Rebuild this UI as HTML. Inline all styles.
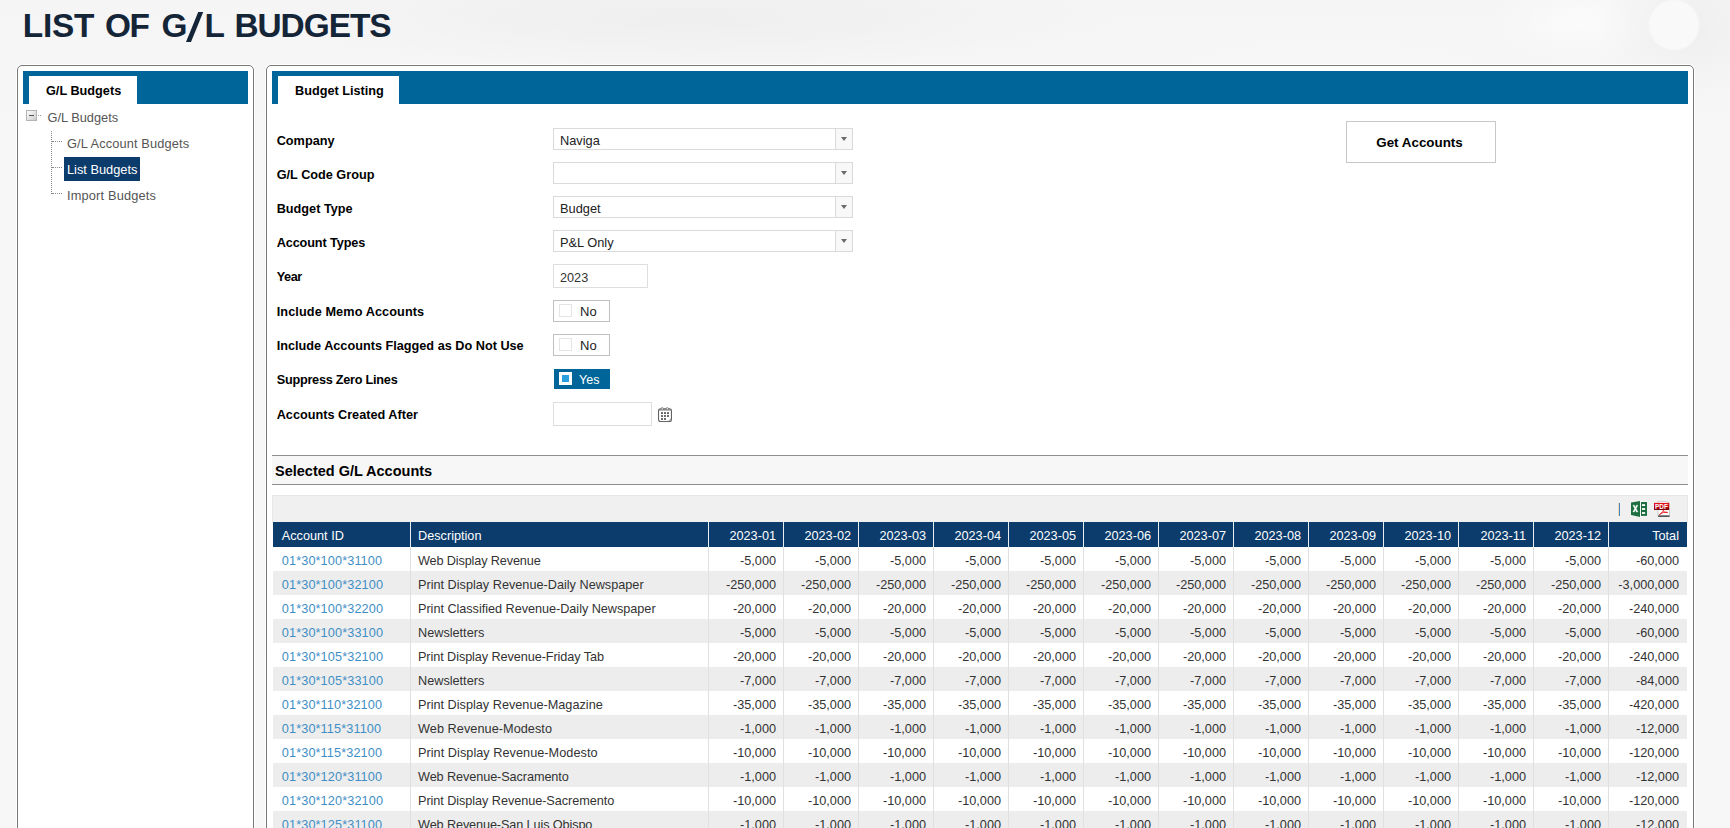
<!DOCTYPE html>
<html><head><meta charset="utf-8"><title>List of G/L Budgets</title>
<style>
*{box-sizing:border-box;margin:0;padding:0}
html,body{width:1730px;height:828px;overflow:hidden}
body{font-family:"Liberation Sans",sans-serif;font-size:13px;color:#222;background:#f6f6f6;position:relative}
.abs{position:absolute}
#bg{position:absolute;left:0;top:0;width:1730px;height:828px;
 background:
 radial-gradient(circle at 1674px 25px,#f9f9f9 0,#f9f9f9 24px,rgba(249,249,249,0) 26px),
 radial-gradient(ellipse 90px 70px at 1690px 30px,rgba(238,238,238,.9),rgba(238,238,238,0)),
 radial-gradient(ellipse 90px 40px at 1580px 22px,rgba(251,251,251,.95),rgba(251,251,251,0)),
 radial-gradient(ellipse 200px 80px at 1330px 110px,rgba(250,250,250,.9),rgba(250,250,250,0)),
 radial-gradient(ellipse 420px 55px at 690px 18px,rgba(238,238,238,.95),rgba(238,238,238,0)),
 linear-gradient(180deg,#f5f5f5 0,#f6f6f6 60px,#f7f7f7 100%);}
h1{position:absolute;left:24px;top:6.5px;width:400px;height:38px;font-size:33.4px;line-height:38px;font-weight:bold;color:#152538;white-space:nowrap}
h1 span{position:absolute;top:0}
.panel{position:absolute;top:65px;height:800px;background:#fff;border:1px solid #787878;border-radius:5px;box-shadow:0 0 0 1px #fff}
#lp{left:17px;width:237px}
#mp{left:266px;width:1428px}
.bar{position:absolute;top:71px;height:33px;background:#006699}
.tab{position:absolute;top:76px;height:28px;background:#fff;font-weight:bold;font-size:12.7px;color:#000;white-space:nowrap}
.tab span{position:absolute;top:7px;line-height:16px}
.tree{position:absolute;font-size:12.8px;color:#555;white-space:nowrap;line-height:16px}
.lbl{position:absolute;left:276.7px;font-weight:bold;font-size:12.7px;color:#000;white-space:nowrap;line-height:16px}
.dd{position:absolute;left:553px;width:300px;height:22px;border:1px solid #dadada;background:#fff;font-size:12.8px;color:#222}
.dd span{position:absolute;left:6px;top:4px;line-height:16px;white-space:nowrap}
.dd i{position:absolute;right:0;top:0;width:17px;height:20px;border-left:1px solid #dadada;background:#f8f8f8}
.dd i:after{content:"";position:absolute;left:4.8px;top:8px;border-left:3.7px solid transparent;border-right:3.7px solid transparent;border-top:4px solid #6a6a6a}
.inp{position:absolute;left:553px;height:24px;border:1px solid #dedede;background:#fff;font-size:12.7px;color:#333}
.inp span{position:absolute;left:6px;top:5px;line-height:16px}
.tg{position:absolute;left:553px;width:57px;height:22px;border:1px solid #c0c0c0;background:#fff;font-size:13px;color:#222}
.tg b{position:absolute;left:5px;top:3px;width:13px;height:13px;border:1px solid #e4e4e4;background:#fff}
.tg span{position:absolute;left:26px;top:3px;line-height:16px;font-weight:normal}
.tg.on{left:554px;top:369px;width:56px;height:20px;border:0;background:#006699;color:#fff}
.tg.on b{left:5px;top:3px;width:13px;height:13px;border:3px solid #fff;background:#2b9fe0}
.tg.on span{left:25px;top:3px;font-size:12.5px}
#btn{position:absolute;left:1346px;top:121px;width:150px;height:42px;border:1px solid #c8c8c8;background:#fff;font-weight:bold;font-size:13.4px;color:#000;text-align:center;line-height:41px;padding-right:3px}
#sec{position:absolute;left:272px;top:455px;width:1416px;height:30px;border-top:1px solid #8e8e8e;border-bottom:1px solid #8e8e8e;background:#f7f7f7}
#sec span{position:absolute;left:3px;top:6px;font-weight:bold;font-size:14.5px;line-height:18px;color:#000;white-space:nowrap}
#tb{position:absolute;left:272px;top:495px;width:1416px;height:28px;background:#f0f0f0;border:1px solid #e6e6e6}
#thead{position:absolute;left:273px;top:522px;width:1414px;height:25px;background:#0c3c6c}
.th{position:absolute;top:0;height:25px;color:#fff;font-size:12.7px;white-space:nowrap;border-left:1px solid #e8eef4}
.th span{position:absolute;top:6px;line-height:16px}
.tr{position:absolute;left:273px;width:1414px;height:24px;background:#fff}
.tr.alt{background:#ededed}
.td{position:absolute;top:0;height:24px;font-size:12.7px;color:#333;white-space:nowrap;border-left:1px solid #e0e0e0}
.td span{position:absolute;top:6px;line-height:16px}
.c0{left:0;width:137px;border-left:0}
.c1{left:137px;width:298px}
.c0 span{left:8.8px}.c1 span{left:7px}
.n span{right:7px}
.tot span{right:8px}
.lnk{color:#3f8fc6;letter-spacing:.12px}
.m1{left:435px;width:75px}.m2{left:510px;width:75px}.m3{left:585px;width:75px}.m4{left:660px;width:75px}
.m5{left:735px;width:75px}.m6{left:810px;width:75px}.m7{left:885px;width:75px}.m8{left:960px;width:75px}
.m9{left:1035px;width:75px}.m10{left:1110px;width:75px}.m11{left:1185px;width:75px}.m12{left:1260px;width:75px}
.tot{left:1335px;width:79px}

</style></head>
<body>
<div id="bg"></div>
<h1 id="title"><span id="w1" style="left:-1.2px;letter-spacing:-.25px">LIST</span><span id="w2" style="left:80.9px;letter-spacing:-1.4px">OF</span><span id="w3" style="left:137.5px">G</span><span id="w3b" style="left:180.6px">L</span><span id="w4" style="left:210.4px;letter-spacing:-1px">BUDGETS</span></h1>
<svg class="abs" style="left:184px;top:10px" width="22" height="34" viewBox="0 0 22 34"><polygon points="14.2,2 19.2,2 7,32 2,32" fill="#152538"/></svg>

<div class="panel" id="lp"></div>
<div class="bar" style="left:23px;width:225px"></div>
<div class="tab" id="ltab" style="left:29px;width:108px"><span id="ltabt" style="left:17px">G/L Budgets</span></div>

<svg class="abs" style="left:26px;top:110px" width="16" height="12" viewBox="0 0 16 12">
 <defs><linearGradient id="eg" x1="0" y1="0" x2="1" y2="1"><stop offset="0" stop-color="#ffffff"/><stop offset="1" stop-color="#c9c9c9"/></linearGradient></defs>
 <rect x="0.5" y="0.5" width="10" height="10" fill="url(#eg)" stroke="#b4b4b4"/>
 <rect x="3" y="5" width="5" height="1" fill="#555"/>
 <rect x="12" y="5" width="1" height="1" fill="#999"/><rect x="14" y="5" width="1" height="1" fill="#999"/>
</svg>
<div class="tree" id="t0" style="left:47.5px;top:110px">G/L Budgets</div>
<div class="abs" style="left:51px;top:131px;width:0;height:63px;border-left:1px dotted #8a8a8a"></div>
<div class="abs" style="left:52px;top:141px;width:10px;height:0;border-top:1px dotted #8a8a8a"></div>
<div class="abs" style="left:52px;top:167px;width:10px;height:0;border-top:1px dotted #8a8a8a"></div>
<div class="abs" style="left:52px;top:193px;width:10px;height:0;border-top:1px dotted #8a8a8a"></div>
<div class="tree" id="t1" style="left:67px;top:136px;letter-spacing:.13px">G/L Account Budgets</div>
<div class="abs" style="left:64px;top:157px;width:76px;height:24px;background:#0c3c6c"></div>
<div class="tree" id="t2" style="left:67px;top:162px;color:#fff">List Budgets</div>
<div class="tree" id="t3" style="left:67px;top:188px;letter-spacing:.16px">Import Budgets</div>

<div class="panel" id="mp"></div>
<div class="bar" style="left:272px;width:1416px"></div>
<div class="tab" id="mtab" style="left:278px;width:121px"><span id="mtabt" style="left:17px">Budget Listing</span></div>

<div class="lbl" id="l1" style="top:133px">Company</div>
<div class="lbl" id="l2" style="top:167px">G/L Code Group</div>
<div class="lbl" id="l3" style="top:201px">Budget Type</div>
<div class="lbl" id="l4" style="top:235px;letter-spacing:-.12px">Account Types</div>
<div class="lbl" id="l5" style="top:269px;letter-spacing:-.4px">Year</div>
<div class="lbl" id="l6" style="top:304px;letter-spacing:.1px">Include Memo Accounts</div>
<div class="lbl" id="l7" style="top:338px">Include Accounts Flagged as Do Not Use</div>
<div class="lbl" id="l8" style="top:372px;letter-spacing:-.25px">Suppress Zero Lines</div>
<div class="lbl" id="l9" style="top:407px">Accounts Created After</div>

<div class="dd" style="top:128px"><span id="d1">Naviga</span><i></i></div>
<div class="dd" style="top:162px"><i></i></div>
<div class="dd" style="top:196px"><span id="d3">Budget</span><i></i></div>
<div class="dd" style="top:230px"><span id="d4">P&amp;L Only</span><i></i></div>
<div class="inp" style="top:264px;width:95px"><span id="yr">2023</span></div>
<div class="tg" style="top:300px"><b></b><span id="no1">No</span></div>
<div class="tg" style="top:334px"><b></b><span id="no2">No</span></div>
<div class="tg on"><b></b><span id="yes">Yes</span></div>
<div class="inp" style="top:402px;width:99px"></div>
<svg class="abs" id="cal" style="left:658px;top:407px" width="14" height="15" viewBox="0 0 14 15">
 <rect x="0.55" y="1.85" width="12.9" height="12.6" rx="2" fill="#fff" stroke="#636363" stroke-width="1.1"/>
 <rect x="1" y="2.2" width="12" height="1.3" fill="#808080"/>
 <rect x="3.35" y="0.35" width="1.6" height="2.6" rx=".8" fill="#fff" stroke="#747474" stroke-width=".7"/>
 <rect x="8.45" y="0.35" width="1.6" height="2.6" rx=".8" fill="#fff" stroke="#747474" stroke-width=".7"/>
 <g fill="#5c5c5c"><rect x="3" y="5.2" width="2" height="1.8"/><rect x="6" y="5.2" width="2" height="1.8"/><rect x="9" y="5.2" width="2" height="1.8"/>
 <rect x="3" y="8.1" width="2" height="1.8"/><rect x="6" y="8.1" width="2" height="1.8"/><rect x="9" y="8.1" width="2" height="1.8"/>
 <rect x="3" y="11.1" width="2" height="1.8"/><rect x="6" y="11.1" width="2" height="1.8"/></g>
 <path d="M10.2 14 L13 11.2 L13 12.4 Q13 14 11.4 14 Z" fill="#a9a9a9"/>
</svg>

<div id="btn"><span id="btnt">Get Accounts</span></div>

<div id="sec"><span id="sect">Selected G/L Accounts</span></div>
<div id="tb"></div>
<div class="abs" style="left:1618px;top:503px;width:1px;height:13px;background:#f3d7b0"></div><div class="abs" style="left:1619px;top:503px;width:1px;height:13px;background:#3f86c4"></div>
<svg class="abs" id="xls" style="left:1631px;top:501px" width="16" height="16" viewBox="0 0 16 16">
 <rect x="9.6" y="0.6" width="6.9" height="14.7" fill="#fbfbfb"/>
 <rect x="10" y="1" width="6" height="13.9" fill="#1d6f42"/>
 <rect x="11" y="3.2" width="3.1" height="1.8" fill="#fff"/><rect x="11" y="7.1" width="3.1" height="1.8" fill="#fff"/><rect x="11" y="11.1" width="3.1" height="1.8" fill="#fff"/>
 <path d="M-0.4 1 L9.5 -0.5 L9.5 16.5 L-0.4 14.4 Z" fill="#fbfbfb"/>
 <path d="M0 1.4 L9 0 L9 16 L0 14 Z" fill="#1d6f42"/>
 <path d="M1.9 4.2 L3.5 4.2 L4.45 6.4 L5.4 4.2 L6.9 4.2 L5.25 7.6 L6.95 11 L5.4 11 L4.4 8.8 L3.4 11 L1.85 11 L3.6 7.6 Z" fill="#fff" stroke="#fff" stroke-width=".35"/>
</svg>
<svg class="abs" id="pdf" style="left:1654px;top:501px" width="16" height="16" viewBox="0 0 16 16">
 <defs><linearGradient id="pg" x1="0" y1="0" x2="0" y2="1"><stop offset="0" stop-color="#e8121a"/><stop offset=".55" stop-color="#c40008"/><stop offset="1" stop-color="#6e0004"/></linearGradient></defs>
 <path d="M4 0.4 L12.6 0.4 L15.5 2.4 L15.5 15 L4 15 Z" fill="#fff" stroke="#bdbdbd" stroke-width=".8"/>
 <rect x="4" y="14.6" width="11.6" height="1.2" rx=".5" fill="#2a2a2a"/>
 <rect x="0" y="1.9" width="15.1" height="7.1" fill="url(#pg)"/>
 <text x="7.5" y="7.8" font-family="Liberation Sans" font-weight="bold" font-size="6.5" fill="#fff" text-anchor="middle" textLength="13" lengthAdjust="spacingAndGlyphs">PDF</text>
 <path d="M5.4 13.6 C7.6 12.6 8.8 10.8 9.3 9.3 C9.5 11 11 12 13.6 11.4 C11.5 10.6 8 11.4 5.4 13.6 Z" fill="none" stroke="#e8121a" stroke-width=".9"/>
</svg>
<div id="thead"><div class="th c0"><span>Account ID</span></div><div class="th c1"><span>Description</span></div><div class="th n m1"><span>2023-01</span></div><div class="th n m2"><span>2023-02</span></div><div class="th n m3"><span>2023-03</span></div><div class="th n m4"><span>2023-04</span></div><div class="th n m5"><span>2023-05</span></div><div class="th n m6"><span>2023-06</span></div><div class="th n m7"><span>2023-07</span></div><div class="th n m8"><span>2023-08</span></div><div class="th n m9"><span>2023-09</span></div><div class="th n m10"><span>2023-10</span></div><div class="th n m11"><span>2023-11</span></div><div class="th n m12"><span>2023-12</span></div><div class="th n tot"><span>Total</span></div></div>
<div class="tr" style="top:547px"><div class="td c0"><span class="lnk">01*30*100*31100</span></div><div class="td c1"><span style="letter-spacing:-0.144px">Web Display Revenue</span></div><div class="td n m1"><span>-5,000</span></div><div class="td n m2"><span>-5,000</span></div><div class="td n m3"><span>-5,000</span></div><div class="td n m4"><span>-5,000</span></div><div class="td n m5"><span>-5,000</span></div><div class="td n m6"><span>-5,000</span></div><div class="td n m7"><span>-5,000</span></div><div class="td n m8"><span>-5,000</span></div><div class="td n m9"><span>-5,000</span></div><div class="td n m10"><span>-5,000</span></div><div class="td n m11"><span>-5,000</span></div><div class="td n m12"><span>-5,000</span></div><div class="td n tot"><span>-60,000</span></div></div>
<div class="tr alt" style="top:571px"><div class="td c0"><span class="lnk">01*30*100*32100</span></div><div class="td c1"><span>Print Display Revenue-Daily Newspaper</span></div><div class="td n m1"><span>-250,000</span></div><div class="td n m2"><span>-250,000</span></div><div class="td n m3"><span>-250,000</span></div><div class="td n m4"><span>-250,000</span></div><div class="td n m5"><span>-250,000</span></div><div class="td n m6"><span>-250,000</span></div><div class="td n m7"><span>-250,000</span></div><div class="td n m8"><span>-250,000</span></div><div class="td n m9"><span>-250,000</span></div><div class="td n m10"><span>-250,000</span></div><div class="td n m11"><span>-250,000</span></div><div class="td n m12"><span>-250,000</span></div><div class="td n tot"><span>-3,000,000</span></div></div>
<div class="tr" style="top:595px"><div class="td c0"><span class="lnk">01*30*100*32200</span></div><div class="td c1"><span style="letter-spacing:-0.037px">Print Classified Revenue-Daily Newspaper</span></div><div class="td n m1"><span>-20,000</span></div><div class="td n m2"><span>-20,000</span></div><div class="td n m3"><span>-20,000</span></div><div class="td n m4"><span>-20,000</span></div><div class="td n m5"><span>-20,000</span></div><div class="td n m6"><span>-20,000</span></div><div class="td n m7"><span>-20,000</span></div><div class="td n m8"><span>-20,000</span></div><div class="td n m9"><span>-20,000</span></div><div class="td n m10"><span>-20,000</span></div><div class="td n m11"><span>-20,000</span></div><div class="td n m12"><span>-20,000</span></div><div class="td n tot"><span>-240,000</span></div></div>
<div class="tr alt" style="top:619px"><div class="td c0"><span class="lnk">01*30*100*33100</span></div><div class="td c1"><span>Newsletters</span></div><div class="td n m1"><span>-5,000</span></div><div class="td n m2"><span>-5,000</span></div><div class="td n m3"><span>-5,000</span></div><div class="td n m4"><span>-5,000</span></div><div class="td n m5"><span>-5,000</span></div><div class="td n m6"><span>-5,000</span></div><div class="td n m7"><span>-5,000</span></div><div class="td n m8"><span>-5,000</span></div><div class="td n m9"><span>-5,000</span></div><div class="td n m10"><span>-5,000</span></div><div class="td n m11"><span>-5,000</span></div><div class="td n m12"><span>-5,000</span></div><div class="td n tot"><span>-60,000</span></div></div>
<div class="tr" style="top:643px"><div class="td c0"><span class="lnk">01*30*105*32100</span></div><div class="td c1"><span style="letter-spacing:-0.089px">Print Display Revenue-Friday Tab</span></div><div class="td n m1"><span>-20,000</span></div><div class="td n m2"><span>-20,000</span></div><div class="td n m3"><span>-20,000</span></div><div class="td n m4"><span>-20,000</span></div><div class="td n m5"><span>-20,000</span></div><div class="td n m6"><span>-20,000</span></div><div class="td n m7"><span>-20,000</span></div><div class="td n m8"><span>-20,000</span></div><div class="td n m9"><span>-20,000</span></div><div class="td n m10"><span>-20,000</span></div><div class="td n m11"><span>-20,000</span></div><div class="td n m12"><span>-20,000</span></div><div class="td n tot"><span>-240,000</span></div></div>
<div class="tr alt" style="top:667px"><div class="td c0"><span class="lnk">01*30*105*33100</span></div><div class="td c1"><span>Newsletters</span></div><div class="td n m1"><span>-7,000</span></div><div class="td n m2"><span>-7,000</span></div><div class="td n m3"><span>-7,000</span></div><div class="td n m4"><span>-7,000</span></div><div class="td n m5"><span>-7,000</span></div><div class="td n m6"><span>-7,000</span></div><div class="td n m7"><span>-7,000</span></div><div class="td n m8"><span>-7,000</span></div><div class="td n m9"><span>-7,000</span></div><div class="td n m10"><span>-7,000</span></div><div class="td n m11"><span>-7,000</span></div><div class="td n m12"><span>-7,000</span></div><div class="td n tot"><span>-84,000</span></div></div>
<div class="tr" style="top:691px"><div class="td c0"><span class="lnk">01*30*110*32100</span></div><div class="td c1"><span>Print Display Revenue-Magazine</span></div><div class="td n m1"><span>-35,000</span></div><div class="td n m2"><span>-35,000</span></div><div class="td n m3"><span>-35,000</span></div><div class="td n m4"><span>-35,000</span></div><div class="td n m5"><span>-35,000</span></div><div class="td n m6"><span>-35,000</span></div><div class="td n m7"><span>-35,000</span></div><div class="td n m8"><span>-35,000</span></div><div class="td n m9"><span>-35,000</span></div><div class="td n m10"><span>-35,000</span></div><div class="td n m11"><span>-35,000</span></div><div class="td n m12"><span>-35,000</span></div><div class="td n tot"><span>-420,000</span></div></div>
<div class="tr alt" style="top:715px"><div class="td c0"><span class="lnk">01*30*115*31100</span></div><div class="td c1"><span style="letter-spacing:0.052px">Web Revenue-Modesto</span></div><div class="td n m1"><span>-1,000</span></div><div class="td n m2"><span>-1,000</span></div><div class="td n m3"><span>-1,000</span></div><div class="td n m4"><span>-1,000</span></div><div class="td n m5"><span>-1,000</span></div><div class="td n m6"><span>-1,000</span></div><div class="td n m7"><span>-1,000</span></div><div class="td n m8"><span>-1,000</span></div><div class="td n m9"><span>-1,000</span></div><div class="td n m10"><span>-1,000</span></div><div class="td n m11"><span>-1,000</span></div><div class="td n m12"><span>-1,000</span></div><div class="td n tot"><span>-12,000</span></div></div>
<div class="tr" style="top:739px"><div class="td c0"><span class="lnk">01*30*115*32100</span></div><div class="td c1"><span style="letter-spacing:0.039px">Print Display Revenue-Modesto</span></div><div class="td n m1"><span>-10,000</span></div><div class="td n m2"><span>-10,000</span></div><div class="td n m3"><span>-10,000</span></div><div class="td n m4"><span>-10,000</span></div><div class="td n m5"><span>-10,000</span></div><div class="td n m6"><span>-10,000</span></div><div class="td n m7"><span>-10,000</span></div><div class="td n m8"><span>-10,000</span></div><div class="td n m9"><span>-10,000</span></div><div class="td n m10"><span>-10,000</span></div><div class="td n m11"><span>-10,000</span></div><div class="td n m12"><span>-10,000</span></div><div class="td n tot"><span>-120,000</span></div></div>
<div class="tr alt" style="top:763px"><div class="td c0"><span class="lnk">01*30*120*31100</span></div><div class="td c1"><span style="letter-spacing:-0.096px">Web Revenue-Sacramento</span></div><div class="td n m1"><span>-1,000</span></div><div class="td n m2"><span>-1,000</span></div><div class="td n m3"><span>-1,000</span></div><div class="td n m4"><span>-1,000</span></div><div class="td n m5"><span>-1,000</span></div><div class="td n m6"><span>-1,000</span></div><div class="td n m7"><span>-1,000</span></div><div class="td n m8"><span>-1,000</span></div><div class="td n m9"><span>-1,000</span></div><div class="td n m10"><span>-1,000</span></div><div class="td n m11"><span>-1,000</span></div><div class="td n m12"><span>-1,000</span></div><div class="td n tot"><span>-12,000</span></div></div>
<div class="tr" style="top:787px"><div class="td c0"><span class="lnk">01*30*120*32100</span></div><div class="td c1"><span style="letter-spacing:-0.063px">Print Display Revenue-Sacremento</span></div><div class="td n m1"><span>-10,000</span></div><div class="td n m2"><span>-10,000</span></div><div class="td n m3"><span>-10,000</span></div><div class="td n m4"><span>-10,000</span></div><div class="td n m5"><span>-10,000</span></div><div class="td n m6"><span>-10,000</span></div><div class="td n m7"><span>-10,000</span></div><div class="td n m8"><span>-10,000</span></div><div class="td n m9"><span>-10,000</span></div><div class="td n m10"><span>-10,000</span></div><div class="td n m11"><span>-10,000</span></div><div class="td n m12"><span>-10,000</span></div><div class="td n tot"><span>-120,000</span></div></div>
<div class="tr alt" style="top:811px"><div class="td c0"><span class="lnk">01*30*125*31100</span></div><div class="td c1"><span style="letter-spacing:-0.119px">Web Revenue-San Luis Obispo</span></div><div class="td n m1"><span>-1,000</span></div><div class="td n m2"><span>-1,000</span></div><div class="td n m3"><span>-1,000</span></div><div class="td n m4"><span>-1,000</span></div><div class="td n m5"><span>-1,000</span></div><div class="td n m6"><span>-1,000</span></div><div class="td n m7"><span>-1,000</span></div><div class="td n m8"><span>-1,000</span></div><div class="td n m9"><span>-1,000</span></div><div class="td n m10"><span>-1,000</span></div><div class="td n m11"><span>-1,000</span></div><div class="td n m12"><span>-1,000</span></div><div class="td n tot"><span>-12,000</span></div></div>


</body></html>
